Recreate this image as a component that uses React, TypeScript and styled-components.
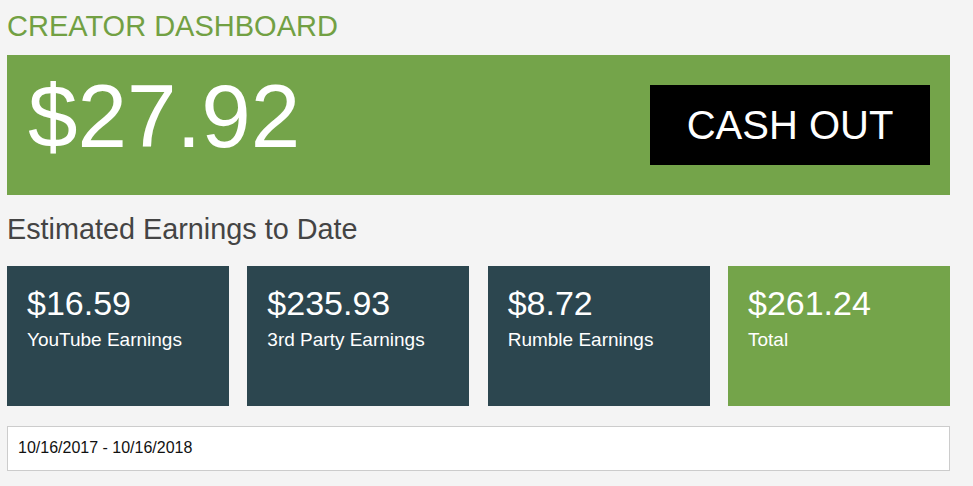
import React from "react";
import styled, { createGlobalStyle } from "styled-components";

const GlobalStyle = createGlobalStyle`
  html, body {
    margin: 0;
    padding: 0;
    background: #f4f4f4;
    font-family: "Liberation Sans", Arial, sans-serif;
  }
`;

const cards = [
  { amount: "$16.59", label: "YouTube Earnings", total: false },
  { amount: "$235.93", label: "3rd Party Earnings", total: false },
  { amount: "$8.72", label: "Rumble Earnings", total: false },
  { amount: "$261.24", label: "Total", total: true },
];

const App = () => {
  return (
    <Page>
      <GlobalStyle />
      <Title>CREATOR DASHBOARD</Title>
      <Banner>
        <Balance>$27.92</Balance>
        <CashOut>CASH OUT</CashOut>
      </Banner>
      <Heading>Estimated Earnings to Date</Heading>
      <Cards>
        {cards.map((c) => (
          <Card key={c.label} $total={c.total}>
            <Amount>{c.amount}</Amount>
            <Label>{c.label}</Label>
          </Card>
        ))}
      </Cards>
      <DateRange>10/16/2017 - 10/16/2018</DateRange>
    </Page>
  );
};

export default App;

const Page = styled.div`
  width: 943px;
  margin-left: 7px;
  padding-top: 11px;
`;

const Title = styled.div`
  color: #72a043;
  font-size: 29px;
  line-height: 30px;
`;

const Banner = styled.div`
  margin-top: 14px;
  height: 140px;
  background: #74a44a;
  display: flex;
  align-items: center;
  justify-content: space-between;
  padding: 0 20px 0 21px;
  box-sizing: border-box;
`;

const Balance = styled.div`
  color: #fff;
  font-size: 89px;
  line-height: 1;
  margin-bottom: 17px;
`;

const CashOut = styled.button`
  width: 280px;
  height: 80px;
  background: #000;
  color: #fff;
  border: none;
  font-family: "Liberation Sans", Arial, sans-serif;
  font-size: 40px;
  padding: 0;
  cursor: pointer;
`;

const Heading = styled.div`
  margin-top: 20px;
  color: #444;
  font-size: 28.8px;
  line-height: 1;
`;

const Cards = styled.div`
  margin-top: 22px;
  display: grid;
  grid-template-columns: repeat(4, 222px);
  justify-content: space-between;
`;

const Card = styled.div<{ $total: boolean }>`
  height: 140px;
  box-sizing: border-box;
  padding: 20px 20px 0 20px;
  background: ${(p) => (p.$total ? "#74a44a" : "#2c464f")};
  color: #fff;
`;

const Amount = styled.div`
  font-size: 34px;
  line-height: 1;
`;

const Label = styled.div`
  margin-top: 10px;
  font-size: 19px;
  line-height: 1;
`;

const DateRange = styled.div`
  margin-top: 20px;
  height: 45px;
  box-sizing: border-box;
  border: 1px solid #cccccc;
  background: #fff;
  display: flex;
  align-items: center;
  padding-left: 10px;
  font-size: 16px;
  color: #111;
`;
